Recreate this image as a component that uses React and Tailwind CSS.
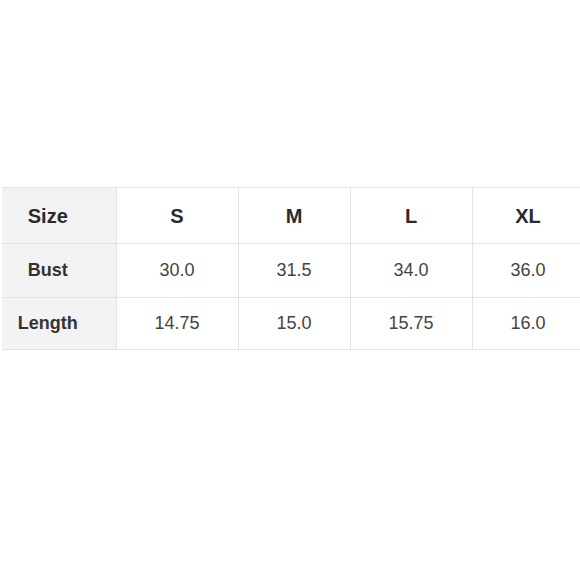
export default function App() {
  const sizes = ['S', 'M', 'L', 'XL']
  const rows = [
    { label: 'Bust', values: ['30.0', '31.5', '34.0', '36.0'], h: 'h-[54px]' },
    { label: 'Length', values: ['14.75', '15.0', '15.75', '16.0'], h: 'h-[52px]' },
  ]
  const widths = ['w-[122px]', 'w-[112px]', 'w-[122px]', 'w-[112px]']

  return (
    <div className="w-[580px] h-[580px] bg-white overflow-hidden pt-[187px] pl-[2px]" style={{ fontFamily: '"Liberation Sans", Arial, sans-serif' }}>
      <table className="border-collapse table-fixed w-[582px]">
        <tbody>
          <tr className="h-[56px]">
            <td className="w-[114px] bg-[#f3f3f3] border border-[#e3e3e3] border-l-0 pr-[22px] text-center text-[20px] font-bold text-[#2a2a2a]">Size</td>
            {sizes.map((s, i) => (
              <td key={s} className={`${widths[i]} border border-[#e3e3e3] text-center text-[20px] font-bold text-[#2a2a2a]`}>{s}</td>
            ))}
          </tr>
          {rows.map((r) => (
            <tr key={r.label} className={r.h}>
              <td className="bg-[#f3f3f3] border border-[#e3e3e3] border-l-0 pr-[22px] text-center text-[18px] font-bold text-[#333]">{r.label}</td>
              {r.values.map((v, i) => (
                <td key={i} className="border border-[#e3e3e3] text-center text-[18px] text-[#444]">{v}</td>
              ))}
            </tr>
          ))}
        </tbody>
      </table>
    </div>
  )
}
